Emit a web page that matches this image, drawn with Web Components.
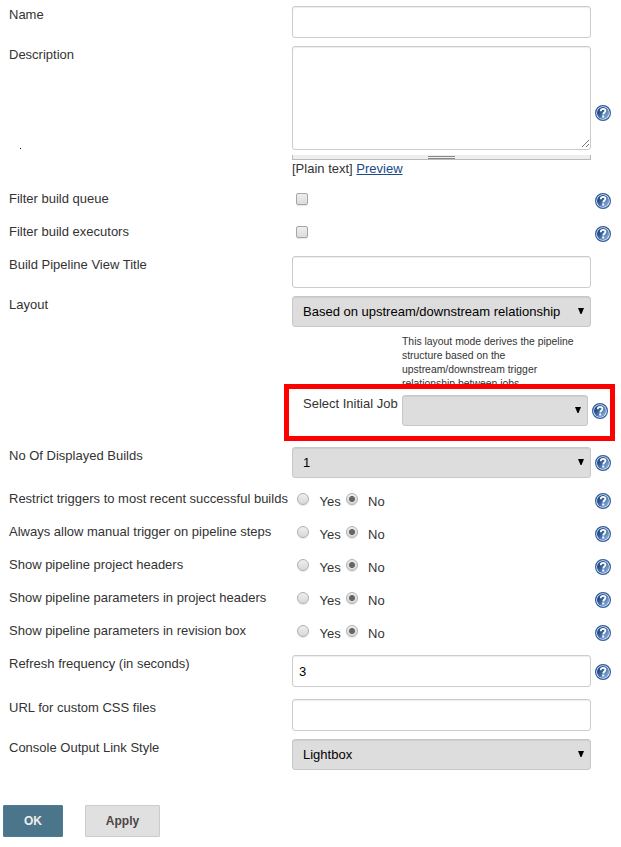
<!DOCTYPE html>
<html lang="en">
<head>
<meta charset="utf-8">
<title>Build Pipeline View</title>
<style>
body { margin: 0; background: #fff; color: #333; font: 13px/15px "Liberation Sans", Arial, sans-serif; }
</style>
</head>
<body>
<pipeline-config></pipeline-config>
<script>
const define = (name, html) => {
  const template = document.createElement('template');
  template.innerHTML = html;
  customElements.define(name, class extends HTMLElement {
    constructor() {
      super();
      this.attachShadow({ mode: 'open' }).append(template.content.cloneNode(true));
    }
  });
};

define('help-icon', `
<style>:host { display: block; width: 16px; height: 16px; } svg { display: block; }</style>
<svg width="16" height="16" viewBox="0 0 16 16">
  <defs><linearGradient id="g" x1="0" y1="0.1" x2="1" y2="0.9"><stop offset="0.25" stop-color="#204a87"/><stop offset="0.95" stop-color="#8fb3dc"/></linearGradient></defs>
  <circle cx="8" cy="8" r="7.4" fill="#e4edf7" stroke="#2f5c9e" stroke-width="1.2"/>
  <circle cx="8" cy="8" r="6" fill="url(#g)"/>
  <path d="M5.7 6.2C5.8 4.4 6.9 3.9 8.1 3.9c1.4 0 2.3.7 2.3 1.9 0 1.7-2.1 1.7-2.1 3.6" fill="none" stroke="#fff" stroke-width="1.8"/>
  <rect x="7.2" y="10.5" width="2" height="2" fill="#fff"/>
</svg>`);

define('text-field', `
<style>
:host { display: block; }
div { box-sizing: border-box; height: 32px; padding: 8px 6px; border: 1px solid #ccc; border-radius: 3px; background: #fff; box-shadow: inset 0 1px 1px rgba(0,0,0,.075); color: #000; }
</style>
<div><slot></slot></div>`);

define('text-area', `
<style>
:host { display: block; }
.box { box-sizing: border-box; height: 104px; display: flex; align-items: end; justify-content: end; border: 1px solid #ccc; border-radius: 3px; box-shadow: inset 0 1px 1px rgba(0,0,0,.075); padding: 0 1px 1px 0; }
.handle { box-sizing: border-box; height: 5px; margin-top: 5px; border: solid #bbb; border-width: 0 1px 1px; background: #eee; display: flex; justify-content: center; padding-top: 1px; }
.grip { box-sizing: border-box; width: 27px; height: 3px; border: solid #888; border-width: 1px 0; }
.info { margin-top: 1px; }
a { color: #204a87; text-decoration: underline; }
</style>
<div class="box"><svg width="8" height="8" viewBox="0 0 8 8" shape-rendering="crispEdges"><path d="M.5 7.5 7.5.5M4.5 7.5l3-3" stroke="#777" fill="none"/></svg></div>
<div class="handle"><div class="grip"></div></div>
<div class="info">[Plain text] <a>Preview</a></div>`);

define('select-field', `
<style>
:host { display: block; }
div { box-sizing: border-box; height: 31px; padding: 0 6px 0 10px; border: 1px solid #c8c8c8; border-radius: 3px; background: #ddd; box-shadow: inset 0 1px 1px rgba(0,0,0,.075); color: #000; display: flex; justify-content: space-between; align-items: center; line-height: 15px; white-space: nowrap; }
svg { display: block; flex: none; margin-bottom: 1px; }
</style>
<div><span><slot></slot></span><svg width="6" height="6" viewBox="0 0 6 6"><path d="M0 0h6L3.5 6h-1z" fill="#000"/></svg></div>`);

define('check-box', `
<style>
:host { display: block; padding: 3px 0 0 4px; }
div { box-sizing: border-box; width: 12px; height: 12px; border: 1px solid #a6a6a6; border-radius: 2px; background: linear-gradient(#eee, #dcdcdc); box-shadow: 0 1px 1px rgba(0,0,0,.1); }
</style><div></div>`);

define('radio-pair', `
<style>
:host { display: grid; grid-template-columns: 22.5px 26.5px 22px 30px; padding: 3px 0 0 5px; }
i { box-sizing: border-box; width: 12px; height: 12px; border: 1px solid #b0b0b0; border-radius: 50%; background: linear-gradient(#eee, #d8d8d8); box-shadow: 0 1px 1px rgba(0,0,0,.1); }
i.on { background: radial-gradient(circle, #666 2.6px, transparent 3.4px), linear-gradient(#eee, #d8d8d8); }
span { padding-top: 1px; }
</style>
<i></i><span>Yes</span><i class="on"></i><span>No</span>`);

define('form-row', `
<style>
:host { display: grid; grid-template-columns: 283px 299px 4px 16px; padding-left: 9px; box-sizing: border-box; height: var(--h, 33px); }
.label { padding-top: 1px; white-space: nowrap; }
.help { grid-column: 4; padding-top: var(--help-top, 3px); }
</style>
<div class="label"><slot name="label"></slot></div>
<div><slot></slot></div>
<div class="help"><slot name="help"></slot></div>`);

define('highlight-box', `
<style>
:host { position: relative; display: grid; grid-template-columns: 99px 186px 4px 16px; box-sizing: border-box; width: 331px; height: 57px; margin: 0 0 6px 284px; border: 5px solid #f00; padding: 6px 0 0 14px; background: #fff; }
.label { padding-top: 1px; white-space: nowrap; }
help-icon { margin-top: 8px; grid-column: 4; }
</style>
<div class="label"><slot></slot></div><select-field></select-field><help-icon></help-icon>`);

define('action-button', `
<style>
:host { display: block; box-sizing: border-box; height: 32px; border: 1px solid #ccc; border-radius: 1px; background: #e0e0e0; color: #4d4545; text-align: center; font-weight: bold; font-size: 12px; line-height: 30px; width: 75px; }
:host([primary]) { width: 60px; border-color: #4b7d95; background: #4b758b; color: #eee; }
</style><slot></slot>`);

define('pipeline-config', `
<style>
:host { display: block; padding-top: 6px; }
.note { margin: 8px 0 0 110px; width: 180px; font-size: 10.4px; line-height: 14px; }
.dot { width: 1px; height: 1px; background: #000; margin: 86px 0 0 11px; }
.actions { display: flex; gap: 22px; padding: 26px 0 0 3px; }
</style>
<form-row style="--h:40px"><span slot="label">Name</span><text-field></text-field></form-row>
<form-row style="--h:144px;--help-top:59px"><div slot="label">Description<div class="dot"></div></div><text-area></text-area><help-icon slot="help"></help-icon></form-row>
<form-row><span slot="label">Filter build queue</span><check-box></check-box><help-icon slot="help"></help-icon></form-row>
<form-row><span slot="label">Filter build executors</span><check-box></check-box><help-icon slot="help"></help-icon></form-row>
<form-row style="--h:40px"><span slot="label">Build Pipeline View Title</span><text-field></text-field></form-row>
<form-row style="--h:88px"><span slot="label">Layout</span><select-field>Based on upstream/downstream relationship</select-field>
  <div class="note">This layout mode derives the pipeline<br>structure based on the<br>upstream/downstream trigger<br>relationship between jobs.</div></form-row>
<highlight-box>Select Initial Job</highlight-box>
<form-row style="--h:43px;--help-top:8px"><span slot="label">No Of Displayed Builds</span><select-field>1</select-field><help-icon slot="help"></help-icon></form-row>
<form-row><span slot="label">Restrict triggers to most recent successful builds</span><radio-pair></radio-pair><help-icon slot="help"></help-icon></form-row>
<form-row><span slot="label">Always allow manual trigger on pipeline steps</span><radio-pair></radio-pair><help-icon slot="help"></help-icon></form-row>
<form-row><span slot="label">Show pipeline project headers</span><radio-pair></radio-pair><help-icon slot="help"></help-icon></form-row>
<form-row><span slot="label">Show pipeline parameters in project headers</span><radio-pair></radio-pair><help-icon slot="help"></help-icon></form-row>
<form-row><span slot="label">Show pipeline parameters in revision box</span><radio-pair></radio-pair><help-icon slot="help"></help-icon></form-row>
<form-row style="--h:44px;--help-top:9px"><span slot="label">Refresh frequency (in seconds)</span><text-field>3</text-field><help-icon slot="help"></help-icon></form-row>
<form-row style="--h:40px"><span slot="label">URL for custom CSS files</span><text-field></text-field></form-row>
<form-row style="--h:40px"><span slot="label">Console Output Link Style</span><select-field>Lightbox</select-field></form-row>
<div class="actions"><action-button primary>OK</action-button><action-button>Apply</action-button></div>`);
</script>
</body>
</html>
